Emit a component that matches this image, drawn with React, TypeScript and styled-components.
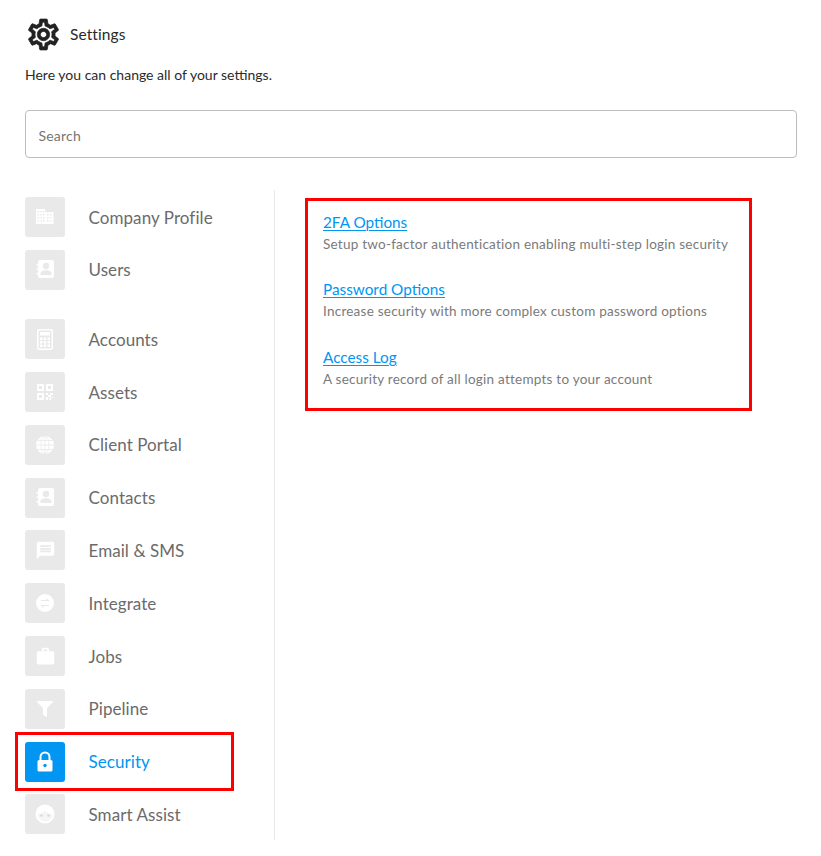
import React from 'react';
import styled, { createGlobalStyle } from 'styled-components';
import { MdMessage, MdWork, MdOutlineSettings } from 'react-icons/md';
import { FaFilter } from 'react-icons/fa';

const GlobalStyle = createGlobalStyle`
  html, body {
    margin: 0;
    padding: 0;
    background: #fff;
    font-family: "Lato", "Open Sans", sans-serif;
  }
`;

const Page = styled.div`
  width: 821px;
  height: 856px;
  padding: 15px 24px 0 25px;
  box-sizing: border-box;
  overflow: hidden;
`;

const TitleRow = styled.div`
  display: flex;
  align-items: center;
  gap: 8px;
  height: 38px;
  font-size: 15.5px;
  letter-spacing: 0.1px;
  color: #2b2b2b;
  svg path:last-child {
    stroke: #222;
    stroke-width: 0.5px;
  }
`;

const Intro = styled.p`
  margin: 7px 0 0;
  height: 30px;
  font-size: 14px;
  line-height: 30px;
  color: #2b2b2b;
`;

const SearchBox = styled.input`
  display: block;
  width: 100%;
  height: 48px;
  margin-top: 20px;
  padding: 2px 13px 0 12.5px;
  box-sizing: border-box;
  border: 1px solid #bdbdbd;
  border-radius: 4px;
  font: inherit;
  font-size: 14px;
  letter-spacing: 0.2px;
  color: #444;
  &::placeholder {
    color: #757575;
    opacity: 1;
  }
`;

const Columns = styled.div`
  display: flex;
  margin-top: 32px;
`;

const Sidebar = styled.nav`
  width: 250px;
  height: 650px;
  padding-top: 7px;
  box-sizing: border-box;
  border-right: 1px solid #e8e8e8;
`;

const Group = styled.div`
  display: flex;
  flex-direction: column;
  gap: 12.8px;
  & + & {
    margin-top: 29.45px;
  }
`;

const Item = styled.div<{ $active?: boolean }>`
  position: relative;
  display: flex;
  align-items: center;
  gap: 23.5px;
  height: 40px;
  font-size: 17px;
  letter-spacing: 0.07px;
  color: ${(p) => (p.$active ? '#0096f2' : '#6b6b6b')};
`;

const IconTile = styled.span<{ $active?: boolean }>`
  display: flex;
  align-items: center;
  justify-content: center;
  flex: none;
  width: 40px;
  height: 40px;
  border-radius: 3px;
  background: ${(p) => (p.$active ? '#0096f2' : '#e9e9e9')};
  color: #fff;
`;

const Callout = styled.span`
  position: absolute;
  left: -10px;
  top: -10px;
  width: 219px;
  height: 59px;
  box-sizing: border-box;
  border: 3px solid #f00;
  pointer-events: none;
`;

const Panel = styled.section`
  width: 447px;
  height: 213px;
  margin: 8px 0 0 30px;
  padding: 10px 15px;
  box-sizing: border-box;
  border: 3px solid #f00;
`;

const Option = styled.div`
  height: 67.3px;
`;

const OptionLink = styled.a`
  display: block;
  font-size: 15.3px;
  line-height: 22px;
  color: #0096f2;
  text-decoration: underline;
  text-underline-offset: 2px;
  text-decoration-thickness: 1px;
`;

const OptionText = styled.div`
  margin-top: 1px;
  font-size: 13.5px;
  line-height: 20px;
  letter-spacing: 0.24px;
  color: #7a7a7a;
`;

// tile-sized drawings, 40x40 so the coordinates match the tile
const Tile = ({ children }: { children: React.ReactNode }) => (
  <svg width="40" height="40" viewBox="0 0 40 40" fill="#fff">
    {children}
  </svg>
);

const Dots = ({ xs, ys, size = 1.5, fill = '#e9e9e9' }: { xs: number[]; ys: number[]; size?: number; fill?: string }) => (
  <>
    {ys.map((y) => xs.map((x) => <rect key={x + '-' + y} x={x} y={y} width={size} height={size} fill={fill} />))}
  </>
);

const BuildingIcon = () => (
  <Tile>
    <path d="M11 12h9v3h8.500v12H11z" />
    <Dots xs={[12.500, 15.500, 18, 22, 25]} ys={[14, 17, 20, 23]} />
  </Tile>
);

const ContactIcon = () => (
  <Tile>
    <path d="M15 10h12a2 2 0 0 1 2 2v14a2 2 0 0 1-2 2H15a2 2 0 0 1-2-2v-1.500h-1.500v-1.500H13v-3h-1.500v-1.500H13v-3h-1.500V14H13v-2a2 2 0 0 1 2-2z" />
    <circle cx="21" cy="16" r="3.200" fill="#e9e9e9" />
    <path d="M15.500 25v-1.500c0-2 3-3.200 5.500-3.200s5.500 1.200 5.500 3.200V25z" fill="#e9e9e9" />
  </Tile>
);

const CalculatorIcon = () => (
  <Tile>
    <path fillRule="evenodd" d="M14 10h12a2 2 0 0 1 2 2v17a2 2 0 0 1-2 2H14a2 2 0 0 1-2-2V12a2 2 0 0 1 2-2zm0 1.500a.5.5 0 0 0-.5.500v17a.5.5 0 0 0 .5.500h12a.5.5 0 0 0 .5-.500V12a.5.5 0 0 0-.5-.500z" />
    <rect x="15" y="13" width="10" height="3.500" />
    <Dots xs={[15, 18.700, 22.500]} ys={[18.500, 22, 25.500]} size={2.500} fill="#fff" />
  </Tile>
);

const QrIcon = () => (
  <Tile>
    <path fillRule="evenodd" d="M12 12h7v7h-7zm2 2v3h3v-3zM21 12h7v7h-7zm2 2v3h3v-3zM12 21h7v7h-7zm2 2v3h3v-3z" />
    <path d="M21 21h2v2h-2zM25 21h3v2h-3zM23 23h3v2h-3zM21 25h2v3h-2zM26 25h2v1h-2zM24 26h2v2h-2z" />
  </Tile>
);

const GlobeIcon = () => (
  <Tile>
    <circle cx="20" cy="20" r="9" />
    <g fill="none" stroke="#e9e9e9" strokeWidth="0.800">
      <ellipse cx="20" cy="20" rx="4" ry="9" />
      <path d="M20 11v18M11 20h18M12.500 15.500h15M12.500 24.500h15" />
    </g>
  </Tile>
);

const SwapIcon = () => (
  <Tile>
    <circle cx="20" cy="20" r="9" />
    <path d="M16 17h5.500v-2l3 3h-8.500zM24 23h-5.500v2l-3-3h8.500z" fill="#e9e9e9" />
  </Tile>
);

const LockIcon = () => (
  <Tile>
    <path fill="none" stroke="#fff" strokeWidth="2" d="M15.500 19v-4a4.500 4.500 0 0 1 9 0v4" />
    <rect x="12.500" y="18" width="15" height="11.500" rx="1.500" />
    <circle cx="20" cy="23.500" r="1.700" fill="#0096f2" />
  </Tile>
);

const FaceIcon = () => (
  <Tile>
    <circle cx="20" cy="20" r="9.500" />
    <path d="M12.500 20c3 0 6-1 7.500-3.500 1.500 2.500 4.500 3.500 7.500 3.500a7.500 7.500 0 0 1-15 0z" fill="#f5f5f5" />
    <circle cx="16.500" cy="21.500" r="1.300" fill="#d9d9d9" />
    <circle cx="23.500" cy="21.500" r="1.300" fill="#d9d9d9" />
  </Tile>
);

const groups = [
  [
    { label: 'Company Profile', icon: <BuildingIcon /> },
    { label: 'Users', icon: <ContactIcon /> },
  ],
  [
    { label: 'Accounts', icon: <CalculatorIcon /> },
    { label: 'Assets', icon: <QrIcon /> },
    { label: 'Client Portal', icon: <GlobeIcon /> },
    { label: 'Contacts', icon: <ContactIcon /> },
    { label: 'Email & SMS', icon: <MdMessage size={21} /> },
    { label: 'Integrate', icon: <SwapIcon /> },
    { label: 'Jobs', icon: <MdWork size={21} /> },
    { label: 'Pipeline', icon: <FaFilter size={16} /> },
    { label: 'Security', icon: <LockIcon />, active: true },
    { label: 'Smart Assist', icon: <FaceIcon /> },
  ],
];

const options = [
  { title: '2FA Options', text: 'Setup two-factor authentication enabling multi-step login security' },
  { title: 'Password Options', text: 'Increase security with more complex custom password options' },
  { title: 'Access Log', text: 'A security record of all login attempts to your account' },
];

export default function App() {
  return (
    <Page>
      <GlobalStyle />
      <TitleRow>
        <MdOutlineSettings size={37} color="#222" />
        Settings
      </TitleRow>
      <Intro>Here you can change all of your settings.</Intro>
      <SearchBox placeholder="Search" />
      <Columns>
        <Sidebar>
          {groups.map((items, i) => (
            <Group key={i}>
              {items.map((item) => (
                <Item key={item.label} $active={item.active}>
                  <IconTile $active={item.active}>{item.icon}</IconTile>
                  {item.label}
                  {item.active && <Callout />}
                </Item>
              ))}
            </Group>
          ))}
        </Sidebar>
        <Panel>
          {options.map((o) => (
            <Option key={o.title}>
              <OptionLink href="#">{o.title}</OptionLink>
              <OptionText>{o.text}</OptionText>
            </Option>
          ))}
        </Panel>
      </Columns>
    </Page>
  );
}
